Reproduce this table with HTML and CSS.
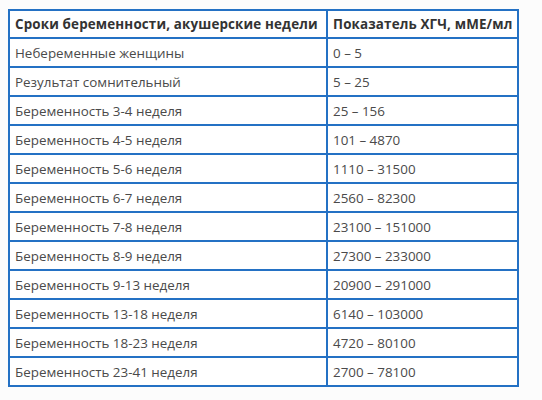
FILE: index.html
```html
<!DOCTYPE html>
<html lang="ru">
<head>
<meta charset="utf-8">
<link rel="stylesheet" href="styles.css">
</head>
<body>
<table class="hcg">
  <thead>
    <tr><th class="c1">Сроки беременности, акушерские недели</th><th class="c2">Показатель ХГЧ, мМЕ/мл</th></tr>
  </thead>
  <tbody>
    <tr><td>Небеременные женщины</td><td>0 – 5</td></tr>
    <tr><td>Результат сомнительный</td><td>5 – 25</td></tr>
    <tr><td>Беременность 3-4 неделя</td><td>25 – 156</td></tr>
    <tr><td>Беременность 4-5 неделя</td><td>101 – 4870</td></tr>
    <tr><td>Беременность 5-6 неделя</td><td>1110 – 31500</td></tr>
    <tr><td>Беременность 6-7 неделя</td><td>2560 – 82300</td></tr>
    <tr><td>Беременность 7-8 неделя</td><td>23100 – 151000</td></tr>
    <tr><td>Беременность 8-9 неделя</td><td>27300 – 233000</td></tr>
    <tr><td>Беременность 9-13 неделя</td><td>20900 – 291000</td></tr>
    <tr><td>Беременность 13-18 неделя</td><td>6140 – 103000</td></tr>
    <tr><td>Беременность 18-23 неделя</td><td>4720 – 80100</td></tr>
    <tr><td>Беременность 23-41 неделя</td><td>2700 – 78100</td></tr>
  </tbody>
</table>
</body>
</html>
```
FILE: styles.css
```css
html, body {
  margin: 0;
  padding: 0;
  background: #fcfcfc;
}
body {
  padding: 9px 0 0 8px;
  font-family: "Open Sans", "Noto Sans", sans-serif;
  font-size: 13.4px;
  color: #4a4a4a;
}
.hcg {
  border-collapse: collapse;
  background: #fff;
  width: 511px;
  table-layout: fixed;
}
.hcg th, .hcg td {
  border: 2px solid #2471c4;
  text-align: left;
  padding: 0 5px;
  height: 27px;
  white-space: nowrap;
}
.hcg th {
  font-weight: bold;
  color: #333;
  height: 26px;
  letter-spacing: 0.15px;
}
.hcg .c1 { width: 306px; }
```
